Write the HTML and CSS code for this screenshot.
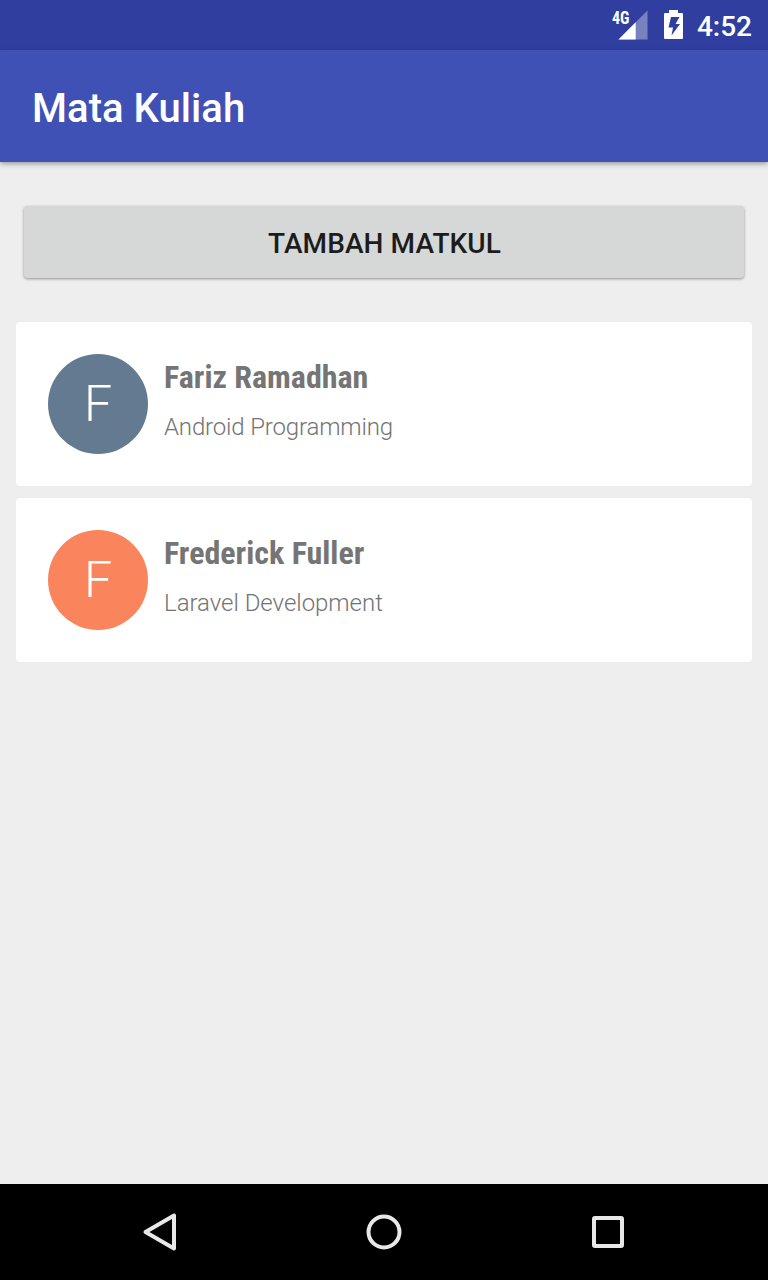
FILE: index.html
```html
<!DOCTYPE html>
<html lang="id">
<head>
<meta charset="utf-8">
<title>Mata Kuliah</title>
<link rel="stylesheet" href="styles.css">
</head>
<body>
<div class="status-bar">
  <svg class="signal" width="38" height="32" viewBox="0 0 38 32">
    <path d="M35.500 1.500V30.500H6.500Z" fill="#fff" fill-opacity=".35"/>
    <path d="M23.700 13.300V30.500H6.500Z" fill="#fff"/>
    <text class="network" x="0" y="15" textLength="17.500" lengthAdjust="spacingAndGlyphs">4G</text>
  </svg>
  <svg class="battery" width="20" height="32" viewBox="0 0 20 32">
    <path fill="#fff" fill-rule="evenodd" d="M5 1H14V4H18Q19 4 19 5V29Q19 30 18 30H1Q0 30 0 29V5Q0 4 1 4H5ZM7 8L4.500 18.500H9L7.500 26.500L16 15H11.500L15.500 8Z"/>
  </svg>
  <span class="clock">4:52</span>
</div>
<header class="app-bar"><h1 class="app-title">Mata Kuliah</h1></header>
<main class="content">
  <button class="add-button"><span class="add-label">TAMBAH MATKUL</span></button>
  <div class="card">
    <div class="avatar avatar-blue">F</div>
    <div class="card-text">
      <div class="name">Fariz Ramadhan</div>
      <div class="course course-android">Android Programming</div>
    </div>
  </div>
  <div class="card">
    <div class="avatar avatar-orange">F</div>
    <div class="card-text">
      <div class="name">Frederick Fuller</div>
      <div class="course">Laravel Development</div>
    </div>
  </div>
</main>
<nav class="nav-bar">
  <svg width="48" height="48" viewBox="0 0 48 48"><path d="M38 7.500V40.500L9.500 24Z"/></svg>
  <svg width="48" height="48" viewBox="0 0 48 48"><circle cx="24" cy="24" r="15.500"/></svg>
  <svg width="48" height="48" viewBox="0 0 48 48"><rect x="10" y="10" width="28" height="28" rx="1"/></svg>
</nav>
</body>
</html>
```
FILE: styles.css
```css
* { box-sizing: border-box; }
body {
  margin: 0;
  height: 1280px;
  display: flex;
  flex-direction: column;
  background: #eee;
  font-family: Roboto, sans-serif;
  overflow: hidden;
}
.status-bar {
  height: 50px;
  display: flex;
  justify-content: flex-end;
  padding: 9px 16px 0 0;
  background: #303f9f;
  color: #fff;
}
.signal { margin-right: 14px; }
.battery { margin-right: 13px; }
.network { font: 700 17.5px "Roboto Condensed", Roboto, sans-serif; fill: #fff; }
.clock { font-size: 28px; font-weight: 500; line-height: 35px; }
.app-bar {
  height: 112px;
  display: flex;
  align-items: center;
  padding: 4px 32px 0;
  background: #3f51b5;
  box-shadow: 0 2px 5px rgba(0,0,0,.35);
}
.app-title { margin: 0; color: #fff; font-size: 40px; font-weight: 500; letter-spacing: .05px; }
.content { flex: 1; padding: 44px 16px 0; }
.add-button {
  display: block;
  width: 720px;
  height: 72px;
  margin: 0 0 44px 8px;
  padding: 2px 0 0 1px;
  border: 0;
  border-radius: 4px;
  background: #d6d8d7;
  box-shadow: 0 1px 3px rgba(0,0,0,.4);
  color: #1c1c1c;
  font: 500 28px Roboto, sans-serif;
  letter-spacing: .1px;
}
.card {
  height: 164px;
  display: flex;
  padding: 32px;
  margin-bottom: 12px;
  border-radius: 4px;
  background: #fff;
}
.avatar {
  width: 100px;
  height: 100px;
  margin-right: 16px;
  border-radius: 50%;
  color: #fff;
  font-size: 50px;
  font-weight: 300;
  line-height: 100px;
  text-align: center;
}
.avatar-blue { background: #647a91; }
.avatar-orange { background: #fa855c; }
.name { height: 46px; line-height: 46px; font-family: "Roboto Condensed", Roboto, sans-serif; font-size: 32px; font-weight: 700; color: #757575; }
.course { margin-top: 8px; font-size: 24px; font-weight: 300; line-height: 38px; color: #737373; letter-spacing: -.03px; }
.course-android { letter-spacing: -.15px; }
.nav-bar {
  height: 96px;
  display: flex;
  justify-content: center;
  align-items: center;
  gap: 176px;
  background: #000;
}
.nav-bar svg { fill: none; stroke: #e8e8e8; stroke-width: 4; stroke-linejoin: round; }
```
